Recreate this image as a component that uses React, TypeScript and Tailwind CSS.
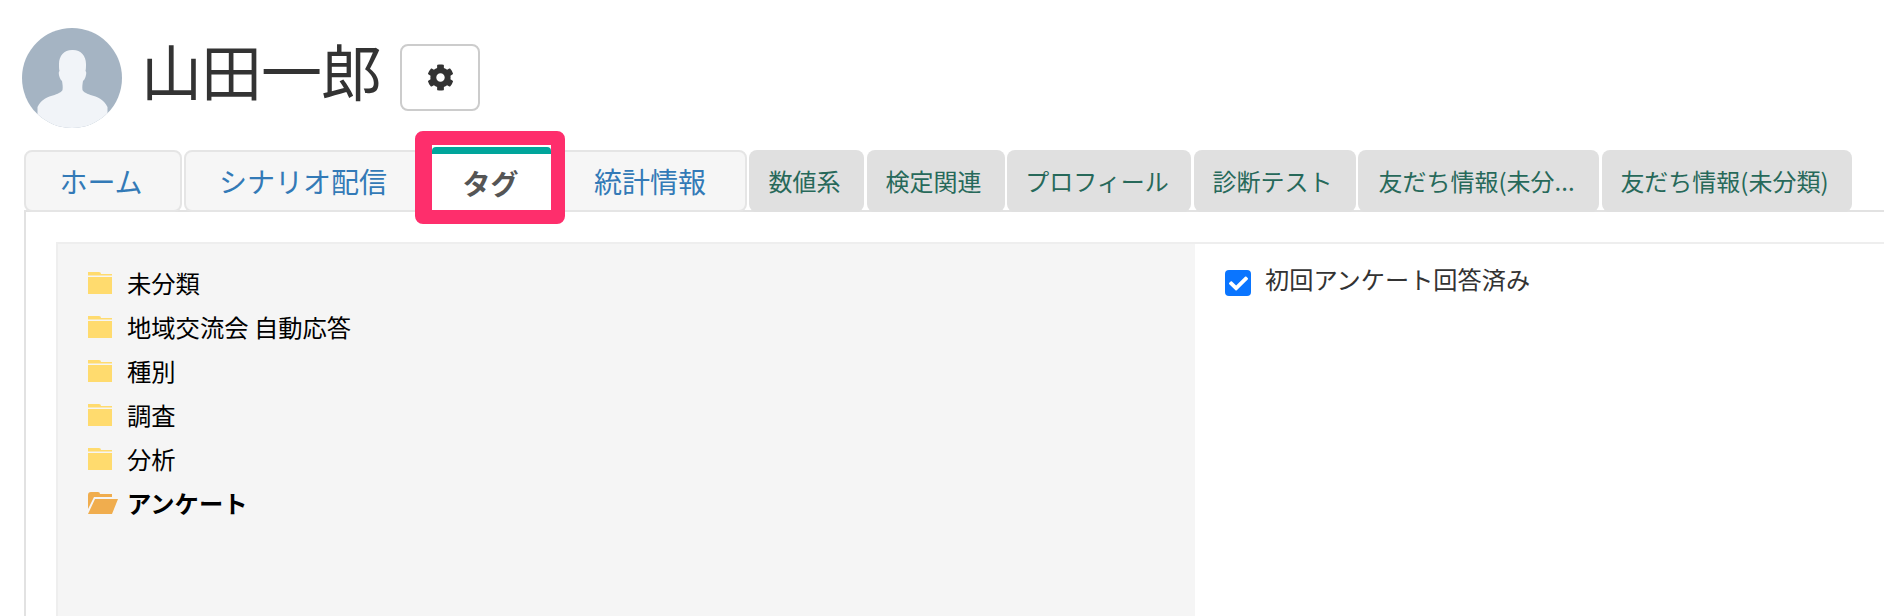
import { FaCheck, FaCog } from "react-icons/fa";

const FONT = "font-['Noto_Sans_CJK_JP','Noto_Sans',sans-serif]";

function Avatar() {
  return (
    <svg width="100" height="100" viewBox="0 0 100 100" className="shrink-0">
      <defs>
        <clipPath id="avatar-clip">
          <circle cx="50" cy="50" r="50" />
        </clipPath>
      </defs>
      <circle cx="50" cy="50" r="50" fill="#a5b4c3" />
      <path
        clipPath="url(#avatar-clip)"
        fill="#f1f4f8"
        d="M50 22c-8 0-13 6-13 14 0 3 0 5 .5 7-1 .5-1 3 0 6 .7 2 1.500 3 2.500 4 .5 3 1 6 .5 9-1 2-3 3-8 5-7 2-13 4-17 12v21h70V79c-4-8-10-10-17-12-5-2-7-3-8-5-.5-3 0-6 .5-9 1-1 1.800-2 2.500-4 1-3 1-5.500 0-6 .5-2 .5-4 .5-7 0-8-5-14-13-14z"
      />
    </svg>
  );
}

function FolderClosed() {
  return (
    <svg width="24" height="22" viewBox="0 0 24 22" className="shrink-0">
      <path fill="#ffdb6e" d="M4 0h7a2 2 0 0 1 2 2H24v1.500H0V2a2 2 0 0 1 4-2z" />
      <path fill="#ffdb6e" d="M0 5h24v17H0z" />
    </svg>
  );
}

function FolderOpen() {
  return (
    <svg width="30" height="22" viewBox="0 0 30 22" className="shrink-0">
      <path fill="#f0ad4e" d="M3 0h7a2 2 0 0 1 2 2h12v3H6L0 17V3a3 3 0 0 1 3-3z" />
      <path fill="#f0ad4e" d="M7 7h23l-6 15H0z" />
    </svg>
  );
}

function BlueTab({ label, width }: { label: string; width: string }) {
  return (
    <div
      className={`flex h-[62px] ${width} items-center justify-center rounded-lg border-2 border-[#e5e5e5] bg-[#f6f6f6] text-[28px] leading-none text-[#337ab7]`}
    >
      {label}
    </div>
  );
}

function GrayTab({ label, width }: { label: string; width: string }) {
  return (
    <div
      className={`flex h-[62px] ${width} items-center justify-center rounded-lg bg-[#e0e0e0] pb-[1px] pr-[4px] text-[24px] leading-none text-[#27695a]`}
    >
      {label}
    </div>
  );
}

function TreeItem({ label, open }: { label: string; open?: boolean }) {
  return (
    <div className="flex h-[44px] items-center">
      <div className="flex w-[39px]">{open ? <FolderOpen /> : <FolderClosed />}</div>
      <span className={`whitespace-nowrap text-[24.300px] leading-none text-black ${open ? "font-bold" : ""}`}>
        {label}
      </span>
    </div>
  );
}

export default function App() {
  return (
    <div className={`${FONT} h-[616px] w-[1884px] overflow-hidden bg-white`}>
      {/* header */}
      <div className="flex items-center pl-[22px] pt-[28px]">
        <Avatar />
        <h1 className="mb-[18px] ml-[19px] whitespace-nowrap text-[61px] font-normal leading-none tracking-[-1px] text-[#333]">
          山田一郎
        </h1>
        <button className="ml-[19px] mt-[-2px] flex h-[67px] w-[80px] items-center justify-center rounded-lg border-2 border-[#ccc] bg-white text-[#333]">
          <FaCog size={27} />
        </button>
      </div>

      {/* tabs */}
      <div className="relative z-10 mt-[17px] flex items-end pl-[24px]">
        <BlueTab label="ホーム" width="w-[158px] pr-[4px]" />
        <div className="ml-[2px]">
          <BlueTab label="シナリオ配信" width="w-[238px]" />
        </div>
        <div className="relative ml-[8px] flex h-[67px] w-[121px] items-center justify-center border-l-2 border-[#e5e5e5] bg-white pr-[2px] pt-[8px] text-[28px] font-bold leading-none text-[#555]">
          <div className="absolute inset-x-0 top-[2px] h-[7px] rounded-t bg-[#00a59b]" />
          タグ
          {/* highlight frame drawn over the screenshot */}
          <div className="pointer-events-none absolute -bottom-[12px] -left-[17px] -right-[14px] -top-[14px] rounded-lg border-[14px] border-l-[17px] border-[#fe2e6c]" />
        </div>
        <div className="ml-[2px]">
          <BlueTab label="統計情報" width="w-[194px]" />
        </div>
        <div className="ml-[2px] flex gap-[2.500px]">
          <GrayTab label="数値系" width="w-[115px]" />
          <GrayTab label="検定関連" width="w-[138px]" />
          <GrayTab label="プロフィール" width="w-[184px]" />
          <GrayTab label="診断テスト" width="w-[162px]" />
          <GrayTab label="友だち情報(未分..." width="w-[241px]" />
          <GrayTab label="友だち情報(未分類)" width="w-[250px]" />
        </div>
      </div>

      {/* tab panel */}
      <div className="ml-[24px] mt-[-2px] h-[406px] border-l-2 border-t-2 border-[#e2e2e2] pl-[30px] pt-[30px]">
        <div className="flex h-full border-t-2 border-[#eee]">
          <div className="w-[1139px] border-l-2 border-[#eee] bg-[#f5f5f5] pl-[30px] pt-[17px]">
            <TreeItem label="未分類" />
            <TreeItem label="地域交流会 自動応答" />
            <TreeItem label="種別" />
            <TreeItem label="調査" />
            <TreeItem label="分析" />
            <TreeItem label="アンケート" open />
          </div>
          <div className="flex items-start pl-[30px] pt-[26px]">
            <div className="flex h-[26px] w-[26px] items-center justify-center rounded bg-[#0a75ff] text-white">
              <FaCheck size={19} />
            </div>
            <span className="ml-[14px] mt-[-4px] whitespace-nowrap text-[24.200px] leading-[26px] text-[#333]">
              初回アンケート回答済み
            </span>
          </div>
        </div>
      </div>
    </div>
  );
}
